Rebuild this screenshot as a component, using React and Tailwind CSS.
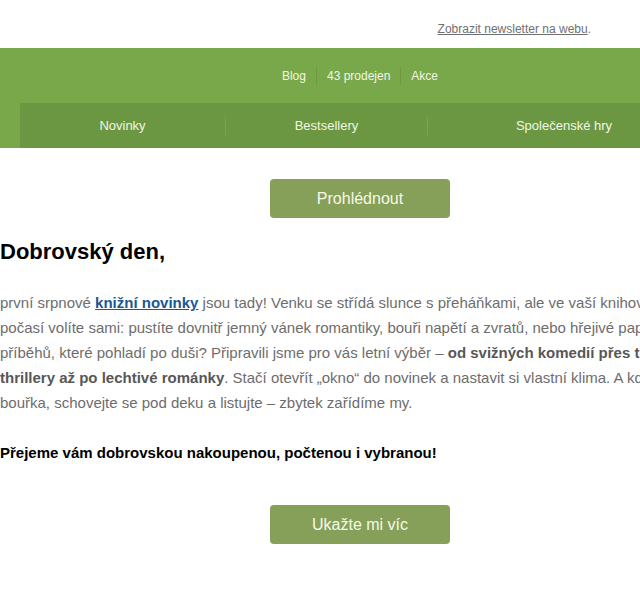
export default function App() {
  const topLinks = ['Blog', '43 prodejen', 'Akce'];
  const mainLinks = [
    { name: 'Novinky', w: 'w-[205px]' },
    { name: 'Bestsellery', w: 'w-[202px]' },
    { name: 'Společenské hry', w: 'w-[273px]' },
  ];

  return (
    <div className="w-full overflow-hidden bg-white">
      <div className="w-[720px] font-['Liberation_Sans',Arial,sans-serif]">
        {/* Web version link */}
        <div className="h-[48px] flex items-center justify-end pr-[129px] pt-[10px] text-[12px] text-[#6f6f6f]">
          <span>
            <a href="#" className="underline">Zobrazit newsletter na webu</a>.
          </span>
        </div>

        {/* Green menu */}
        <div className="bg-[#79a84b]">
          <div className="h-[55px] flex items-center justify-center text-[12px] text-[#f1f6e4]">
            {topLinks.map((l, i) => (
              <div key={l} className={`px-[10px] leading-[18px] ${i > 0 ? 'border-l border-[#6c9a40]' : ''}`}>
                {l}
              </div>
            ))}
          </div>
          <div className="mx-[20px] h-[45px] bg-[#6b9743] flex items-center text-[13px] text-[#f1f6e4]">
            {mainLinks.map((l, i) => (
              <div
                key={l.name}
                className={`${l.w} h-[18px] flex items-center justify-center ${i > 0 ? 'border-l border-[#78a64f]' : ''}`}
              >
                {l.name}
              </div>
            ))}
          </div>
        </div>

        {/* Top button */}
        <div className="pt-[31px] flex justify-center">
          <a href="#" className="w-[180px] h-[39px] rounded-[4px] bg-[#86a05a] flex items-center justify-center text-[16px] text-[#f6f9e6]">
            Prohlédnout
          </a>
        </div>

        <h1 className="mt-[21px] text-[22px] leading-[26px] font-bold text-black">Dobrovský den,</h1>

        <p className="mt-[25px] text-[15px] leading-[25px] text-[#6d6d6d] whitespace-nowrap">
          první srpnové{' '}
          <a href="#" className="font-bold text-[#1b5796] underline">knižní novinky</a> jsou tady! Venku se střídá slunce s přeháňkami, ale ve vaší knihovně
          <br />
          počasí volíte sami: pustíte dovnitř jemný vánek romantiky, bouři napětí a zvratů, nebo hřejivé paprsky
          <br />
          příběhů, které pohladí po duši? Připravili jsme pro vás letní výběr – <b className="text-[#575757]">od svižných komedií přes temné</b>
          <br />
          <b className="text-[#575757]">thrillery až po lechtivé románky</b>. Stačí otevřít „okno“ do novinek a nastavit si vlastní klima. A když
          <br />
          bouřka, schovejte se pod deku a listujte – zbytek zařídíme my.
        </p>

        <p className="mt-[25px] text-[15px] leading-[25px] font-bold text-black">
          Přejeme vám dobrovskou nakoupenou, počtenou i vybranou!
        </p>

        {/* Bottom button */}
        <div className="mt-[40px] pb-[56px] flex justify-center">
          <a href="#" className="w-[180px] h-[39px] rounded-[4px] bg-[#86a05a] flex items-center justify-center text-[16px] text-[#f6f9e6]">
            Ukažte mi víc
          </a>
        </div>
      </div>
    </div>
  );
}
